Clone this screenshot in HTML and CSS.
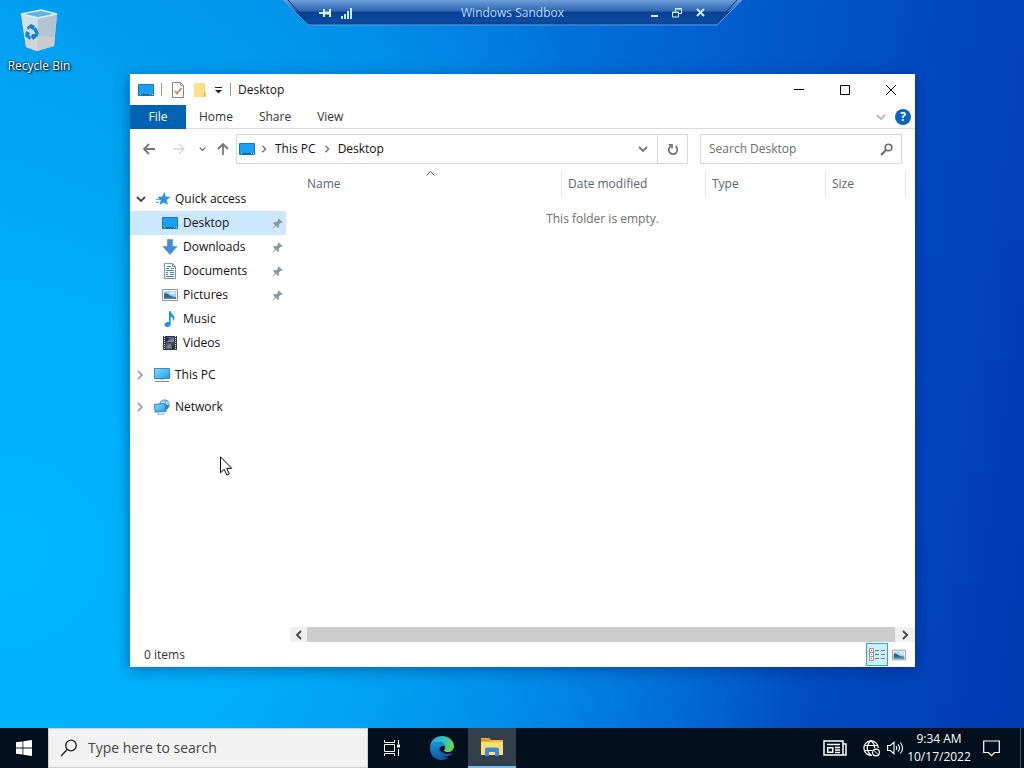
FILE: index.html
```html
<!DOCTYPE html>
<html lang="en">
<head>
<meta charset="utf-8">
<title>Windows Sandbox</title>
<link rel="stylesheet" href="styles.css">
</head>
<body>
<svg class="defs" aria-hidden="true">
  <defs>
    <linearGradient id="screen" x1="0" y1="0" x2="1" y2="1"><stop offset="0" stop-color="#1b9df2"/><stop offset="1" stop-color="#13a3ff"/></linearGradient>
    <linearGradient id="pcscreen" x1="0" y1="0" x2="1" y2="1"><stop offset="0" stop-color="#8bdcfb"/><stop offset="1" stop-color="#1c9be6"/></linearGradient>
    <symbol id="i-desktop" viewBox="0 0 16 16"><path d="M.5 2.500h15v11H.5z" fill="url(#screen)" stroke="#1a77b8"/><path d="M1 12.500h14" stroke="#0f639f"/><path d="M2 12.500h1m9 0h1m1 0h1" stroke="#cde9fa"/></symbol>
    <symbol id="i-pin" viewBox="0 0 12 12"><path d="M7.500.5l4 4-1 1-1-.2-2 2 .2 2.500-1.200 1L4.200 8.500 1 11.500l-.5-.5L3.500 7.800 1.200 5.500l1-1.200 2.500.2 2-2-.2-1z" fill="#8e979f"/></symbol>
    <symbol id="i-right" viewBox="0 0 8 10"><path d="M2 1l4 4-4 4" fill="none" stroke="currentColor" stroke-width="1.800"/></symbol>
    <symbol id="i-down" viewBox="0 0 10 8"><path d="M1 2l4 4 4-4" fill="none" stroke="currentColor" stroke-width="1.800"/></symbol>
    <symbol id="i-picture" viewBox="0 0 16 16"><path d="M.5 2.500h15v11H.5z" fill="#fff" stroke="#8a94a0"/><path d="M2 4h12v8H2z" fill="#a9d3f2"/><path d="M2 6.500c3-1 4 1 6 2s3 1 6 1.500v2H2z" fill="#35637f"/><path d="M2 10.500c4-1 7-.5 12 0V12H2z" fill="#4a7fb5"/><path d="M8 5h5v2H9z" fill="#e9f6ff"/></symbol>
  </defs>
</svg>

<main class="desktop">
  <a class="shortcut" href="#recycle">
    <svg class="bin" viewBox="0 0 40 46" aria-hidden="true">
      <path d="M2 6L22 2l16 4-3 32-17 5L7 39z" fill="#c3d6e3"/>
      <path d="M2 6l17 4-1 33L7 39z" fill="#d3dfe8"/>
      <path d="M19 10l19-4-3 32-17 5z" fill="#b3c3cf"/>
      <path d="M18 28l18 1-1 9-17 5L7 39l-1-9z" fill="#d4d0d0" opacity=".7"/>
      <path d="M4 6l18-3 14 3-17 3z" fill="#5db2df"/>
      <path d="M2 6l20-4 16 4-19 4z" fill="none" stroke="#d8ebf5" stroke-width="1.300"/>
      <path d="M8 19l4-3 4 2-2 4-3-2-2 2zM17 19l3 7-3 1-3-6zM19 28l-5 4-2-3 1-3h5zM11 32l-5-4 1-5 4 2-1 2 2 2z" fill="#1681cf"/>
    </svg>
    <span>Recycle Bin</span>
  </a>

  <header class="remote">
    <svg class="remote-shape" viewBox="0 0 459 26" preserveAspectRatio="none" aria-hidden="true">
      <defs><linearGradient id="bar" x1="0" y1="0" x2="0" y2="1"><stop offset="0" stop-color="#6f9fdb"/><stop offset=".42" stop-color="#2f68b4"/><stop offset=".5" stop-color="#0b3f91"/><stop offset="1" stop-color="#0a4fa9"/></linearGradient></defs>
      <path d="M0 0H459L434 25H25z" fill="url(#bar)"/><path d="M0 0L25 25H434L459 0" fill="none" stroke="#5f9bdc"/><path d="M5 0L26 23H433L454 0" fill="none" stroke="#083a80"/>
    </svg>
    <div class="remote-group">
      <button class="rb" aria-label="Pin"><svg width="12" height="12" viewBox="0 0 12 12"><path d="M0 6h5M5 2v8M11 2v8" stroke="#d9f2ff" stroke-width="2"/><path d="M5 6h6" stroke="#d9f2ff" stroke-width="3"/></svg></button>
      <button class="rb" aria-label="Connection quality"><svg width="12" height="12" viewBox="0 0 12 12"><path d="M1 9v3M4 7v5M7 4v8M10 1v11" stroke="#c4eaff" stroke-width="2"/></svg></button>
    </div>
    <h1 class="remote-title">Windows Sandbox</h1>
    <div class="remote-group end">
      <button class="rb" aria-label="Minimize"><svg width="12" height="12" viewBox="0 0 12 12"><path d="M3 9h7" stroke="#d5f1ff" stroke-width="2"/></svg></button>
      <button class="rb" aria-label="Restore"><svg width="12" height="12" viewBox="0 0 12 12"><path d="M4.500 4V1.500h6v5H8M1.500 5h6v5h-6zM1 5.500h7M4 2h7" fill="none" stroke="#d5f1ff"/></svg></button>
      <button class="rb" aria-label="Close"><svg width="12" height="12" viewBox="0 0 12 12"><path d="M3 2l7 7M10 2L3 9" stroke="#d5f1ff" stroke-width="2"/></svg></button>
    </div>
  </header>

  <section class="window" aria-label="Desktop">
    <div class="titlebar">
      <svg class="ic" aria-hidden="true"><use href="#i-desktop"/></svg>
      <i class="sep"></i>
      <button class="tool" aria-label="Properties"><svg class="ic" viewBox="0 0 16 16"><path d="M2.500.5h8l3 3v12h-11z" fill="#fff" stroke="#858585"/><path d="M10.500.5v3h3" fill="none" stroke="#999"/><path d="M5 9l2 2.500L11.500 6" fill="none" stroke="#d88263" stroke-width="1.800"/></svg></button>
      <button class="tool" aria-label="New folder"><svg class="ic" viewBox="0 0 16 16"><path d="M2 1h11v9l1 1v4H2z" fill="#f6d66f"/><path d="M2 1h10v14H2z" fill="#fbe28a"/><path d="M12.500 10v5" stroke="#dfb645"/></svg></button>
      <button class="tool more" aria-label="Customize toolbar"><svg width="9" height="8" viewBox="0 0 9 8"><path d="M1 1.500h7" stroke="#222"/><path d="M1 4h7L4.500 7.500z" fill="#222"/></svg></button>
      <i class="sep"></i>
      <h2 class="title">Desktop</h2>
      <button class="wbtn" aria-label="Minimize"><svg width="10" height="10"><path d="M0 4.500h10" stroke="#000"/></svg></button>
      <button class="wbtn" aria-label="Maximize"><svg width="10" height="10"><path d="M.5.500h9v9h-9z" fill="none" stroke="#000"/></svg></button>
      <button class="wbtn" aria-label="Close"><svg width="10" height="10"><path d="M0 0l10 10M10 0L0 10" stroke="#000"/></svg></button>
    </div>

    <div class="ribbon">
      <button class="tab file">File</button>
      <button class="tab">Home</button>
      <button class="tab">Share</button>
      <button class="tab">View</button>
      <button class="expand" aria-label="Expand the ribbon"><svg width="10" height="8"><use href="#i-down"/></svg></button>
      <button class="help" aria-label="Help">?</button>
    </div>

    <div class="addressrow">
      <button class="nav" aria-label="Back"><svg width="14" height="12" viewBox="0 0 14 12"><path d="M13 6H2M7 1L2 6l5 5" fill="none" stroke="#777" stroke-width="1.800"/></svg></button>
      <button class="nav" aria-label="Forward" disabled><svg width="14" height="12" viewBox="0 0 14 12"><path d="M1 6h11M7 1l5 5-5 5" fill="none" stroke="#d6d6d6" stroke-width="1.400"/></svg></button>
      <button class="nav recent" aria-label="Recent locations"><svg width="7" height="6" viewBox="0 0 10 8"><use href="#i-down"/></svg></button>
      <button class="nav up" aria-label="Up"><svg width="12" height="14" viewBox="0 0 12 14"><path d="M6 13V2M1 7l5-5 5 5" fill="none" stroke="#777" stroke-width="1.800"/></svg></button>
      <div class="address">
        <svg class="ic" aria-hidden="true"><use href="#i-desktop"/></svg>
        <svg class="crumb" aria-hidden="true"><use href="#i-right"/></svg>
        <a href="#pc">This PC</a>
        <svg class="crumb" aria-hidden="true"><use href="#i-right"/></svg>
        <a href="#desktop">Desktop</a>
        <button class="history" aria-label="Previous locations"><svg width="10" height="8"><use href="#i-down"/></svg></button>
        <button class="refresh" aria-label="Refresh"><svg width="12" height="13" viewBox="0 0 12 13"><path d="M8.500 3.300A4.300 4.300 0 1 1 4 3" fill="none" stroke="#707070" stroke-width="1.700"/><path d="M1.500 1.800H5V5.500" fill="none" stroke="#707070" stroke-width="1.600"/></svg></button>
      </div>
      <label class="find"><input type="text" placeholder="Search Desktop" aria-label="Search Desktop"><svg width="13" height="13" viewBox="0 0 13 13" aria-hidden="true"><circle cx="8.500" cy="4.500" r="3.300" fill="none" stroke="#6a6a6a" stroke-width="1.600"/><path d="M6 7l-5 5" stroke="#6a6a6a" stroke-width="2"/></svg></label>
    </div>

    <div class="body">
      <nav class="tree" aria-label="Navigation pane">
        <a class="node top" href="#quick"><svg class="twist open" width="10" height="8"><use href="#i-down"/></svg><svg class="ic" viewBox="0 0 16 16"><path d="M9.500 1l1.200 4.500 4.800.5-3.800 3 1.300 5-4.500-2.500L4.500 14l1.300-4.500L2.500 6l4.800-.5z" fill="#2a93e0"/><path d="M1 8.500h4M1 11.500h3" stroke="#4fa9e8"/></svg>Quick access</a>
        <a class="node sub selected" href="#desktop"><svg class="ic"><use href="#i-desktop"/></svg>Desktop<svg class="pin"><use href="#i-pin"/></svg></a>
        <a class="node sub" href="#downloads"><svg class="ic" viewBox="0 0 16 16"><path d="M5.500.5h5v7h4.500L8 15.500 1 7.500h4.500z" fill="#3f8ed8" stroke="#2f7bc5" stroke-width=".5"/></svg>Downloads<svg class="pin"><use href="#i-pin"/></svg></a>
        <a class="node sub" href="#documents"><svg class="ic" viewBox="0 0 16 16"><path d="M2.500.5h8l3 3v12h-11z" fill="#fff" stroke="#8b949b"/><path d="M10.500.5v3h3" fill="none" stroke="#7c8790"/><path d="M4 5.500h3M9 5.500h3M4 7.500h8M4 9.500h2M8 9.500h4M4 11.500h2M8 11.500h4M4 13.500h8M5 3.500h4" stroke="#428abd"/></svg>Documents<svg class="pin"><use href="#i-pin"/></svg></a>
        <a class="node sub" href="#pictures"><svg class="ic"><use href="#i-picture"/></svg>Pictures<svg class="pin"><use href="#i-pin"/></svg></a>
        <a class="node sub" href="#music"><svg class="ic" viewBox="0 0 16 16"><path d="M7 0h1.500c0 3 4.500 4 4 7.500-.2 1-.7 2-1.300 2.500.4-3-1.200-4-2.500-4.500V13c0 1.500-1.500 3-3.500 3S2.500 15 2.500 13.500 4.500 10.700 7 11z" fill="#1b8fe0"/></svg>Music</a>
        <a class="node sub" href="#videos"><svg class="ic" viewBox="0 0 16 16"><path d="M1 1h14v14H1z" fill="#333843"/><path d="M2.500 1v14M13.500 1v14" stroke="#dfe3ea" stroke-dasharray="1 1"/><path d="M4 2h8v5.500H4zM4 8.500h8V14H4z" fill="#5160a8"/><path d="M4 4l4 2 4-3v4H4zM5 12l3-3 4 2v2H6z" fill="#8a8c49"/><path d="M4 2l3 1-1 3-2 1zM9 9l3 1v4h-2z" fill="#252b4a"/></svg>Videos</a>
        <a class="node root" href="#pc"><svg class="twist" width="8" height="10"><use href="#i-right"/></svg><svg class="ic" viewBox="0 0 16 16"><path d="M.5 1.500h15v10H.5z" fill="url(#pcscreen)" stroke="#398bbd"/><path d="M6 12h4v1H6z" fill="#bcc5cc"/><path d="M1 14.500h14" stroke="#7b8a95"/></svg>This PC</a>
        <a class="node root" href="#network"><svg class="twist" width="8" height="10"><use href="#i-right"/></svg><svg class="ic" viewBox="0 0 16 16"><circle cx="10.500" cy="5.500" r="5.200" fill="#5ca9d8"/><path d="M7 3c2-2 3-1 4 0s-1 2-2 3-2-1-2-3zM12 2l3 2v3l-3-2z" fill="#b9d8df"/><path d="M.5 5.500l10-1 1.500 8-11 .5z" fill="url(#pcscreen)" stroke="#2b83bd"/><path d="M12 6l3.500 0-3 6z" fill="#3179ac"/><path d="M3 15h8" stroke="#74a9cc"/></svg>Network</a>
      </nav>
      <div class="files">
        <table>
          <colgroup><col><col class="c-date"><col class="c-type"><col class="c-size"><col class="c-end"></colgroup>
          <thead><tr><th class="name" aria-sort="ascending">Name<svg class="sort" width="9" height="5"><path d="M.5 4.500l4-4 4 4" fill="none" stroke="#555"/></svg></th><th>Date modified</th><th>Type</th><th>Size</th><th></th></tr></thead>
          <tbody><tr><td colspan="5">This folder is empty.</td></tr></tbody>
        </table>
        <div class="scroll">
          <button aria-label="Scroll left"><svg width="8" height="10" viewBox="0 0 8 10"><path d="M6 1L2 5l4 4" fill="none" stroke="#444" stroke-width="1.800"/></svg></button>
          <span class="thumb"></span>
          <button class="last" aria-label="Scroll right"><svg width="8" height="10" viewBox="0 0 8 10"><path d="M2 1l4 4-4 4" fill="none" stroke="#444" stroke-width="1.800"/></svg></button>
        </div>
      </div>
    </div>

    <footer class="status">
      <span>0 items</span>
      <button class="view on" aria-label="Details view"><svg width="18" height="14" viewBox="0 0 18 14"><path d="M1.500.5h4v4h-4zM1.500 4.500h4v4h-4zM1.500 8.500h4v4h-4z" fill="#fff" stroke="#a58d9c"/><path d="M3 2.500h1M3 6.500h1M3 10.500h1" stroke="#ca4540"/><path d="M7 2.500h4m2 0h4M7 6.500h4m2 0h4M7 10.500h4m2 0h4" stroke="#6c7a84"/></svg></button>
      <button class="view" aria-label="Large icons view"><svg width="14" height="14"><use href="#i-picture"/></svg></button>
    </footer>
  </section>

  <svg class="cursor" width="13" height="20" viewBox="0 0 13 20" aria-hidden="true"><path d="M.5.800v16l3.700-3.500 2.600 5.700 2.500-1.100-2.600-5.600h5z" fill="#fff" stroke="#000"/></svg>
</main>

<footer class="taskbar">
  <button class="task start" aria-label="Start"><svg width="16" height="16" viewBox="0 0 16 16"><path d="M0 2.300l6.500-.9v6.200H0zM7.300 1.200L16 0v7.600H7.300zM0 8.400h6.500v6.200L0 13.700zM7.300 8.400H16V16l-8.700-1.200z" fill="#fff"/></svg></button>
  <label class="search"><svg width="18" height="18" viewBox="0 0 18 18" aria-hidden="true"><circle cx="11" cy="6.500" r="5.300" fill="none" stroke="#222" stroke-width="1.300"/><path d="M7.200 10.500L1 17" stroke="#222" stroke-width="1.300"/></svg><input type="text" placeholder="Type here to search" aria-label="Type here to search"></label>
  <button class="task" aria-label="Task view"><svg width="16" height="16" viewBox="0 0 16 16"><path d="M.5 0v2.500h10V0M.5 16v-2.500h10V16M.5 4.500h10v7H.5zM14.500 0v4M14.500 9v7" fill="none" stroke="#fff"/><path d="M13 4.500h3v3h-3z" fill="#fff"/></svg></button>
  <button class="task edge" aria-label="Microsoft Edge"><svg width="26" height="26" viewBox="0 0 26 26">
    <defs><linearGradient id="e1" x1="0" y1="0" x2="1" y2=".4"><stop offset="0" stop-color="#23a5dc"/><stop offset=".6" stop-color="#35c1c0"/><stop offset="1" stop-color="#65d35b"/></linearGradient><linearGradient id="e2" x1="0" y1="0" x2="0" y2="1"><stop offset="0" stop-color="#1c91d8"/><stop offset="1" stop-color="#0c57a6"/></linearGradient></defs>
    <path d="M1 13C1 5 7 1 13 1c7 0 12 5 12 10 0 4-3 6-6 6-2 0-4-.7-4-1.600 0-.7 1.200-1.200 1.200-3.200C16 9 13 7 9.500 7 5 7 2 9 1 13z" fill="url(#e1)"/>
    <path d="M1 13c1-4 4-6 8-6 4 0 7 2 7.200 5-2-2-6-1-6 3 0 4 4 8 9 7-2 2-4 3-7 3C6 25 1 20 1 13z" fill="url(#e2)"/>
    <path d="M10.200 13c-2 6 3 9.500 9 8 2-.6 3.500-2 4-2.700.3-.4 0-.6-.4-.4-5 2.500-11.500 0-12.600-4.900z" fill="#1762ae"/></svg></button>
  <button class="task active" aria-label="File Explorer"><svg width="22" height="18" viewBox="0 0 22 18"><path d="M0 0h8l2 2h12v15H0z" fill="#f2b83d"/><path d="M0 4h22v13H0z" fill="#ffdd78"/><path d="M0 1h8l1 2H0z" fill="#d99725"/><path d="M4 18V11q0-1.500 1.500-1.500h11q1.500 0 1.500 1.500v7h-4v-4H8v4z" fill="#408bca"/><path d="M8 14h6v3H8z" fill="#ffdd78"/></svg></button>
  <div class="tray">
    <button class="tb news" aria-label="News"><svg width="24" height="16" viewBox="0 0 24 16"><path d="M1 1h19v14H1zM20 4h3v11h-4" fill="none" stroke="#fff" stroke-width="1.500"/><path d="M4 4.500h13M12 7.500h5M12 10h5M12 12.500h5" stroke="#fff" stroke-width="1.500"/><path d="M4.700 7.700h5v4.600h-5z" fill="none" stroke="#fff" stroke-width="1.500"/></svg></button>
    <button class="tb" aria-label="Network"><svg width="17" height="17" viewBox="0 0 17 17"><path d="M9 15.300A7.200 7.200 0 1 1 15.300 8M8 .8C3 5 3 11 8 15.300M8 .8c3 2.500 3.700 5 3.700 7.200M1 5.500h14M1 10.500h8" fill="none" stroke="#fff" stroke-width="1.200"/><circle cx="13" cy="12.500" r="3.400" fill="#020f1c" stroke="#fff" stroke-width="1.200"/><path d="M10.800 10.300l4.500 4.500" stroke="#fff"/></svg></button>
    <button class="tb" aria-label="Volume"><svg width="17" height="14" viewBox="0 0 17 14"><path d="M.6 4.500h2.800L7 1.300v11.400L3.400 9.500H.6z" fill="none" stroke="#fff" stroke-width="1.100"/><path d="M9 5q1.500 2 0 4M11 3.300q3 3.700 0 7.400M13.300 1.500q4.500 5.500 0 11" fill="none" stroke="#fff" stroke-width="1.100"/></svg></button>
    <button class="clock"><span>9:34 AM</span><span>10/17/2022</span></button>
    <button class="note" aria-label="Notifications"><svg width="17" height="17" viewBox="0 0 17 17"><path d="M.7 1h15.600v11.500h-4.800L8.500 15.700l-3-3.200H.7z" fill="none" stroke="#fff" stroke-width="1.200"/></svg></button>
    <button class="peek" aria-label="Show desktop"></button>
  </div>
</footer>
</body>
</html>
```
FILE: styles.css
```css
* { box-sizing: border-box; }
html, body { height: 100%; }
body {
  margin: 0;
  display: flex;
  flex-direction: column;
  overflow: hidden;
  font: 12px/16px "Open Sans", "Noto Sans", sans-serif;
  color: #111;
  background:
    radial-gradient(ellipse 80% 95% at 0% 72%, #00b7ff 0%, rgba(0, 177, 252, .9) 35%, rgba(0, 140, 235, 0) 100%),
    linear-gradient(98deg, #0096ec 0%, #0088e4 30%, #0067d5 58%, #004bc2 80%, #0039b0 100%);
}
button, input { font: inherit; color: inherit; border: 0; padding: 0; background: none; }
button { display: flex; align-items: center; justify-content: center; }
input { min-width: 0; outline: 0; }
a { color: inherit; text-decoration: none; }
h1, h2 { margin: 0; font: inherit; }
svg { flex: none; display: block; }
.defs { position: absolute; width: 0; height: 0; }
.ic { width: 16px; height: 16px; }

.desktop { position: relative; flex: 1; min-height: 0; }
.shortcut {
  display: flex;
  flex-direction: column;
  align-items: center;
  gap: 4px;
  width: 78px;
  padding-top: 8px;
  color: #fff;
  white-space: nowrap;
  text-shadow: 1px 1px 2px #000, 0 0 2px #000;
}
.bin { width: 40px; height: 46px; }

.remote {
  position: absolute;
  top: 0;
  left: 283px;
  right: 282px;
  height: 26px;
  display: flex;
  align-items: center;
  padding: 0 35px;
  color: #b5dcff;
}
.remote-shape { position: absolute; inset: 0; width: 100%; height: 100%; }
.remote > * + * { position: relative; }
.remote-group { display: flex; flex: 1; gap: 8px; }
.remote-group.end { justify-content: flex-end; gap: 9px; }
.rb { width: 14px; height: 24px; }

.window {
  position: absolute;
  top: 74px;
  left: 129px;
  right: 109px;
  bottom: 61px;
  display: flex;
  flex-direction: column;
  background: #fff;
  border-left: 1px solid #1483c8;
  box-shadow: 0 3px 14px rgba(0, 20, 70, .4);
}
.titlebar { display: flex; align-items: center; height: 31px; padding-left: 8px; }
.sep { width: 1px; height: 13px; background: #999; margin: 0 7px; }
.sep + .tool { margin-left: -2px; }
.tool { width: 22px; height: 24px; }
.tool.more { width: 14px; }
.tool.more + .sep { margin-left: 5px; }
.title { flex: 1; }
.wbtn { width: 46px; height: 30px; }
.wbtn:last-child { width: 47px; padding-right: 2px; }

.ribbon { display: flex; align-items: center; height: 24px; border-bottom: 1px solid #dcdcdc; color: #333; }
.tab { height: 24px; padding: 0 13px; }
.file { width: 56px; color: #fff; background: #0063b1; }
.expand { margin-left: auto; color: #bbb; }
.help { width: 16px; height: 16px; margin: 0 4px 0 9px; border-radius: 50%; background: #0864bd; color: #fff; font-weight: 700; }

.addressrow { display: flex; align-items: center; height: 40px; padding: 0 13px 0 4px; color: #666; }
.nav { width: 30px; height: 28px; }
.nav.recent { width: 16px; }
.nav.up { width: 26px; }
.address { flex: 1; height: 30px; display: flex; align-items: center; border: 1px solid #d9d9d9; padding-left: 2px; color: #111; }
.address .ic { margin-right: 5px; }
.crumb { width: 8px; height: 8px; color: #777; margin-right: 7px; }
.address a + .crumb { margin-left: 7px; }
.history { width: 28px; height: 28px; margin-left: auto; color: #777; }
.refresh { width: 30px; height: 28px; border-left: 1px solid #d9d9d9; }
.find { width: 202px; height: 30px; margin-left: 12px; display: flex; align-items: center; border: 1px solid #d9d9d9; padding: 0 8px; }
.find input { flex: 1; }
.find input::placeholder { color: #6d6d6d; opacity: 1; }

.body { flex: 1; min-height: 0; display: flex; }
.tree { width: 156px; padding-top: 18px; }
.node { display: flex; align-items: center; height: 24px; }
.node .ic { margin-right: 4px; }
.top, .root { padding-left: 6px; }
.top .ic { margin-left: 9px; }
.root { margin-top: 8px; }
.root .ic { margin-left: 10px; margin-right: 5px; }
.twist { color: #a6a6a6; }
.twist.open { color: #444; }
.sub { padding: 0 3px 0 32px; }
.sub .ic { margin-right: 5px; }
.selected { background: #cce8ff; }
.pin { width: 11px; height: 11px; margin-left: auto; }

.files { flex: 1; min-width: 0; margin-left: 4px; display: flex; flex-direction: column; }
table { width: 100%; table-layout: fixed; border-collapse: separate; border-spacing: 0; margin-top: 2px; }
.c-date { width: 144px; }
.c-type { width: 120px; }
.c-size { width: 80px; }
.c-end { width: 10px; }
th { height: 26px; padding: 0 6px; text-align: left; font-weight: 400; color: #5c6470; }
th + th { border-left: 1px solid #e5e5e5; }
th.name { position: relative; padding-left: 17px; }
.sort { position: absolute; top: 0; left: 50%; }
td { height: 44px; padding: 0; text-align: center; color: #6d6d6d; }
.scroll { display: flex; height: 15px; margin-top: auto; background: #f0f0f0; }
.scroll button { width: 17px; }
.scroll .last { width: 20px; }
.thumb { flex: 1; background: #cdcdcd; }

.status { display: flex; align-items: center; height: 25px; padding: 0 5px 0 14px; color: #333; }
.status span { flex: 1; }
.view { width: 22px; height: 23px; }
.view.on { background: #cdeefa; border: 1px solid #30a7c4; }
.cursor { position: absolute; left: 220px; top: 456px; }

.taskbar { display: flex; height: 40px; background: #020f1c; color: #fff; }
.task { width: 48px; height: 40px; }
.edge { width: 52px; }
.task.active { background: #333f49; border-bottom: 2px solid #76b9ed; }
.search { width: 320px; display: flex; align-items: center; gap: 10px; padding-left: 11px; background: #f2f2f2; border: 1px solid #d0d0d0; color: #444; font-size: 14px; line-height: 20px; }
.search input { flex: 1; }
.search input::placeholder { color: #444; opacity: 1; }
.tray { display: flex; align-items: center; margin-left: auto; }
.tb { width: 24px; height: 40px; }
.news { width: 48px; }
.clock { width: 64px; height: 40px; flex-direction: column; line-height: 18px; }
.note { width: 40px; height: 40px; }
.peek { width: 13px; height: 40px; }
.peek::before { content: ""; width: 1px; height: 40px; margin-left: 6px; background: #4a545e; }
```
